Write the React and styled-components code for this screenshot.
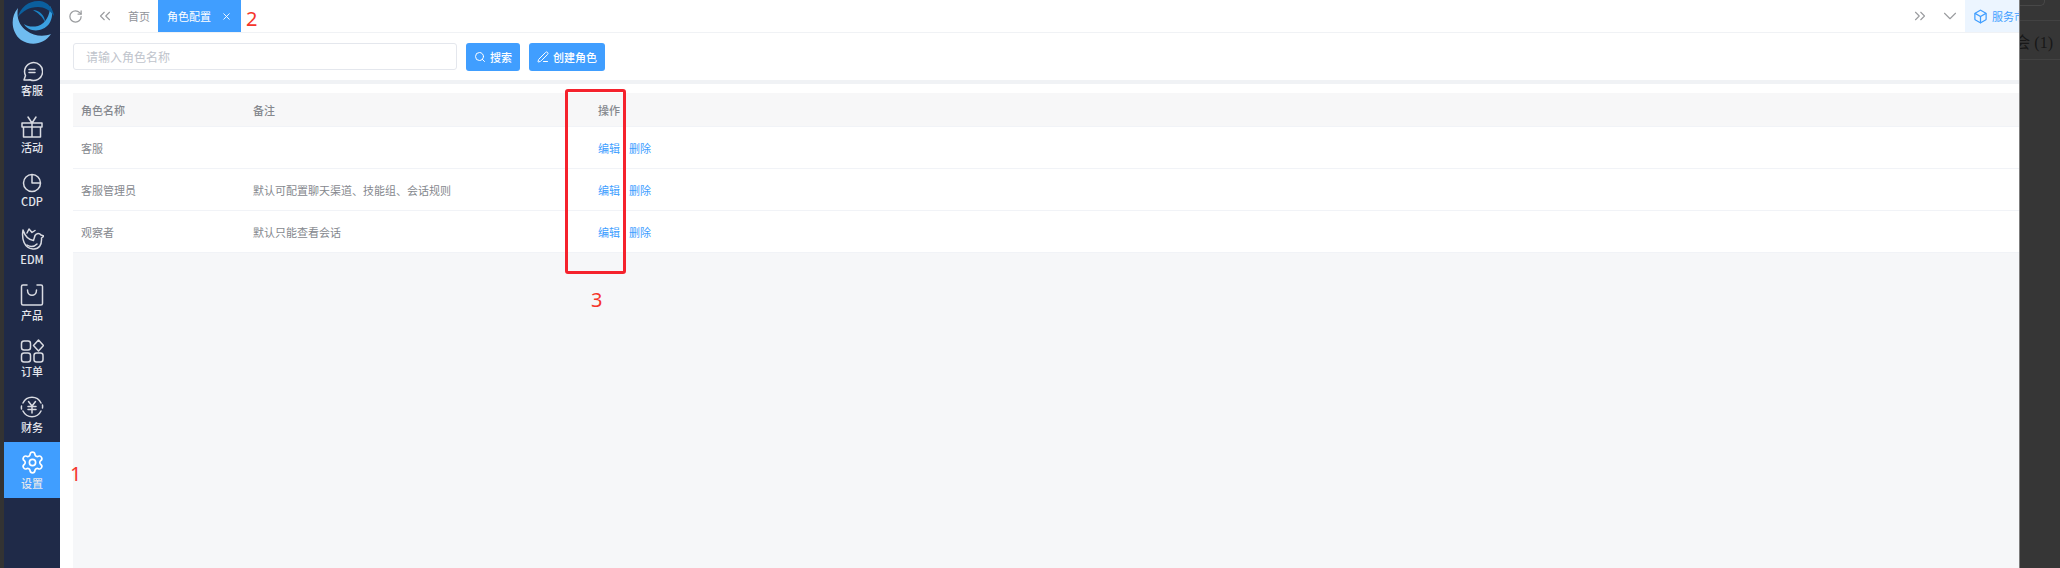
import React from "react";
import styled, { createGlobalStyle } from "styled-components";
import { RotateCw, ChevronsLeft, ChevronsRight, ChevronDown, X, Search, PenLine, Box, Settings } from "lucide-react";

const GlobalStyle = createGlobalStyle`
  html, body { margin: 0; padding: 0; height: 100%; }
  body { font-family: "Noto Sans CJK SC", "Noto Sans", sans-serif; overflow: hidden; }
`;

const Page = styled.div`
  display: flex;
  width: 2060px;
  height: 568px;
  background: #333;
`;

const Sidebar = styled.nav`
  width: 56px;
  margin-left: 4px;
  flex: none;
  background: #1f2a48;
  display: flex;
  flex-direction: column;
  align-items: stretch;
`;

const Logo = styled.div`
  height: 50px;
  display: flex;
  justify-content: center;
  padding-left: 1px;
`;

const NavItem = styled.div`
  height: 56px;
  display: flex;
  flex-direction: column;
  align-items: center;
  justify-content: center;
  gap: 2px;
  font-size: 11px;
  font-weight: 500;
  line-height: 13px;
  color: #e4e6ec;
  background: ${(p) => (p.$active ? "#409eff" : "transparent")};
`;

const Main = styled.main`
  width: 1959px;
  flex: none;
  background: #fff;
  display: flex;
  flex-direction: column;
`;

const TabBar = styled.header`
  height: 32px;
  flex: none;
  display: flex;
  align-items: center;
  border-bottom: 1px solid #f0f2f5;
  color: #909399;
`;

const IconSlot = styled.span`
  width: 30px;
  height: 32px;
  display: flex;
  align-items: center;
  justify-content: center;
  color: #9a9c9f;
`;

const Tab = styled.div`
  height: 32px;
  display: flex;
  align-items: center;
  padding: ${(p) => (p.$active ? "0 9px 0 9px" : "0 8px 0 8px")};
  gap: 10px;
  font-size: 11px;
  background: ${(p) => (p.$active ? "#409eff" : "transparent")};
  color: ${(p) => (p.$active ? "#fff" : "#909399")};
`;

const Spacer = styled.div`
  flex: 1;
`;

const Market = styled.div`
  width: 54px;
  height: 32px;
  overflow: hidden;
  display: flex;
  align-items: center;
  gap: 4px;
  padding-left: 8px;
  box-sizing: border-box;
  background: #ecf5ff;
  color: #409eff;
  font-size: 11px;
  white-space: nowrap;
  flex: none;

  svg {
    flex: none;
  }
`;

const Toolbar = styled.div`
  height: 47px;
  flex: none;
  display: flex;
  align-items: center;
  padding-left: 13px;
  border-bottom: 4px solid #f0f2f5;
`;

const SearchInput = styled.div`
  width: 384px;
  height: 27px;
  box-sizing: border-box;
  border: 1px solid #e4e7ed;
  border-radius: 3px;
  padding-left: 12px;
  display: flex;
  align-items: center;
  font-size: 12px;
  color: #c0c4cc;
  margin-right: 9px;
`;

const Button = styled.div`
  height: 28px;
  box-sizing: border-box;
  padding: 0 8px;
  margin-right: 9px;
  border-radius: 3px;
  background: #409eff;
  color: #fff;
  font-size: 11px;
  font-weight: 500;
  display: flex;
  align-items: center;
  gap: 4px;
`;

const Content = styled.section`
  flex: 1;
  padding-left: 13px;
  padding-top: 9px;
  display: flex;
  flex-direction: column;
`;

const Panel = styled.div`
  flex: 1;
  background: #f6f7f9;
`;

const Row = styled.div`
  height: ${(p) => (p.$head ? 33 : 41)}px;
  display: grid;
  grid-template-columns: 172px 345px auto;
  align-items: center;
  padding-left: 8px;
  background: ${(p) => (p.$head ? "#f7f7f8" : "#fff")};
  border-bottom: 1px solid #f1f3f7;
  font-size: 11px;
  font-weight: ${(p) => (p.$head ? 500 : 400)};
  color: #85888e;
`;

const Actions = styled.div`
  display: flex;
  gap: 9px;
  color: #409eff;
`;

const Note = styled.span`
  position: absolute;
  color: #f5352b;
  font-size: 20px;
  line-height: 24px;
  left: ${(p) => p.$x}px;
  top: ${(p) => p.$y}px;
  font-family: "Noto Sans", sans-serif;
`;

const Marker = styled.div`
  position: absolute;
  left: 565px;
  top: 89px;
  width: 61px;
  height: 185px;
  box-sizing: border-box;
  border: 3px solid #f5222d;
  border-radius: 3px;
`;

const Backdrop = styled.aside`
  width: 41px;
  flex: none;
  box-sizing: border-box;
  border-left: 1px solid #7d7d7d;
  background: #363636;
  display: flex;
  flex-direction: column;
`;

const BackdropTop = styled.div`
  height: 20px;
  border-bottom: 1px solid #424242;
`;

const BackdropBox = styled.div`
  width: 24px;
  height: 5px;
  border: solid #484848;
  border-width: 0 1px 1px 0;
  border-bottom-right-radius: 5px;
`;

const BackdropRow = styled.div`
  height: 39px;
  box-sizing: border-box;
  padding: 2px 7px 0 0;
  border-bottom: 1px solid #424242;
  overflow: hidden;
  display: flex;
  align-items: center;
  justify-content: flex-end;
  color: #181818;
  font-family: "Liberation Serif", "Noto Sans CJK SC", serif;
  font-size: 16px;
  white-space: nowrap;
`;

const Logomark = () => (
  <svg width="44" height="46" viewBox="0 0 44 46">
    <path d="M7 8c-8 9-7 24 3 32 9 6 23 5 30-6-7 3-18 2-24-3C9 27 5 18 7 8z" fill="#6fbcf0" />
    <path d="M13 24c4 8 18 9 25 0 4-6 4-13 1-18 0 9-4 17-12 20-5 1-10 1-14-2z" fill="#3ba0e0" />
    <path d="M7 17c2-10 12-17 22-16 8 1 13 7 14 15-4-6-10-9-16-9-9 0-15 4-20 10z" fill="#0b5f9e" />
    <path d="M22 10c6 0 12 5 12 12-3-6-7-9-12-12z" fill="#1a84c8" />
  </svg>
);

const stroke = { fill: "none", stroke: "#d9dbe2", strokeWidth: 1.5, strokeLinecap: "round", strokeLinejoin: "round" };

const icons = {
  chat: (
    <svg width="22" height="22" viewBox="0 0 22 22" {...stroke}>
      <path d="M3 20l1.500-4.500A9 9 0 1 1 9 19.800c-2 .2-4 .2-6 .2z" />
      <path d="M8 9.500h6M8 12.500h6" />
    </svg>
  ),
  gift: (
    <svg width="24" height="24" viewBox="0 0 22 24" {...stroke}>
      <path d="M1 8h20v4H1zM2.500 12h17v10h-17zM11 8v14M7 2l4 6 4-6" />
    </svg>
  ),
  pie: (
    <svg width="20" height="20" viewBox="0 0 20 20" {...stroke}>
      <circle cx="10" cy="10" r="8.500" />
      <path d="M10 2v8h8" />
    </svg>
  ),
  bird: (
    <svg width="24" height="24" viewBox="0 0 24 24" {...stroke}>
      <path d="M3 3c-1.500 9 1 18 10 19 6 .5 9-4 8.500-11l2.500-2-3-1c-1.500-2-4.500-2-6 .5-.5 2-1 3-1.500 5C9 13 5 9 3 3z" />
      <path d="M7 6l2-4 3 3.500 3-2" />
      <path d="M7 18c3 2 7 2 10-1" />
    </svg>
  ),
  bag: (
    <svg width="24" height="24" viewBox="0 0 24 24" {...stroke}>
      <path d="M7 2H3a1.500 1.500 0 0 0-1.500 1.500v17A1.500 1.500 0 0 0 3 22h18a1.500 1.500 0 0 0 1.500-1.500v-17A1.500 1.500 0 0 0 21 2h-4" />
      <path d="M7.500 7c0 7 9 7 9 0" />
    </svg>
  ),
  grid: (
    <svg width="24" height="24" viewBox="0 0 24 24" {...stroke}>
      <rect x="1.500" y="2" width="9" height="9" rx="2.500" />
      <rect x="1.500" y="14" width="9" height="9" rx="2.500" />
      <rect x="14" y="14" width="9" height="9" rx="2.500" />
      <path d="M18.500 1l5 5.500-5 5.500-5-5.500z" />
    </svg>
  ),
  money: (
    <svg width="24" height="24" viewBox="0 0 24 24" {...stroke}>
      <path d="M3 8a10 10 0 0 1 18 0M21 16a10 10 0 0 1-18 0M1.500 14a10 10 0 0 1 0-3M22.500 10a10 10 0 0 1 0 3" />
      <path d="M8.500 6.500L12 11l3.500-4.500M8 11.500h8M8 14.500h8M12 11v7" />
    </svg>
  ),
  gear: <Settings size={25} color="#fff" strokeWidth={1.6} />,
};

const navItems = [
  { label: "客服", icon: "chat" },
  { label: "活动", icon: "gift" },
  { label: "CDP", icon: "pie" },
  { label: "EDM", icon: "bird" },
  { label: "产品", icon: "bag" },
  { label: "订单", icon: "grid" },
  { label: "财务", icon: "money" },
  { label: "设置", icon: "gear", active: true },
];

const roles = [
  { name: "客服", remark: "" },
  { name: "客服管理员", remark: "默认可配置聊天渠道、技能组、会话规则" },
  { name: "观察者", remark: "默认只能查看会话" },
];

export default function App() {
  return (
    <Page>
      <GlobalStyle />
      <Sidebar>
        <Logo>
          <Logomark />
        </Logo>
        {navItems.map((item) => (
          <NavItem key={item.label} $active={item.active}>
            {icons[item.icon]}
            <span>{item.label}</span>
          </NavItem>
        ))}
      </Sidebar>
      <Main>
        <TabBar>
          <IconSlot>
            <RotateCw size={15} />
          </IconSlot>
          <IconSlot>
            <ChevronsLeft size={18} strokeWidth={1.5} />
          </IconSlot>
          <Tab>首页</Tab>
          <Tab $active>
            角色配置
            <X size={11} />
          </Tab>
          <Spacer />
          <IconSlot>
            <ChevronsRight size={18} strokeWidth={1.5} />
          </IconSlot>
          <IconSlot>
            <ChevronDown size={22} strokeWidth={1.2} />
          </IconSlot>
          <Market>
            <Box size={15} />
            服务市场
          </Market>
        </TabBar>
        <Toolbar>
          <SearchInput>请输入角色名称</SearchInput>
          <Button>
            <Search size={12} />
            搜索
          </Button>
          <Button>
            <PenLine size={12} />
            创建角色
          </Button>
        </Toolbar>
        <Content>
          <Row $head>
            <span>角色名称</span>
            <span>备注</span>
            <span>操作</span>
          </Row>
          {roles.map((role) => (
            <Row key={role.name}>
              <span>{role.name}</span>
              <span>{role.remark}</span>
              <Actions>
                <span>编辑</span>
                <span>删除</span>
              </Actions>
            </Row>
          ))}
          <Panel />
        </Content>
      </Main>
      <Backdrop>
        <BackdropTop>
          <BackdropBox />
        </BackdropTop>
        <BackdropRow>会 (1)</BackdropRow>
      </Backdrop>
      <Note $x={70} $y={462}>1</Note>
      <Note $x={246} $y={7}>2</Note>
      <Note $x={591} $y={288}>3</Note>
      <Marker />
    </Page>
  );
}
